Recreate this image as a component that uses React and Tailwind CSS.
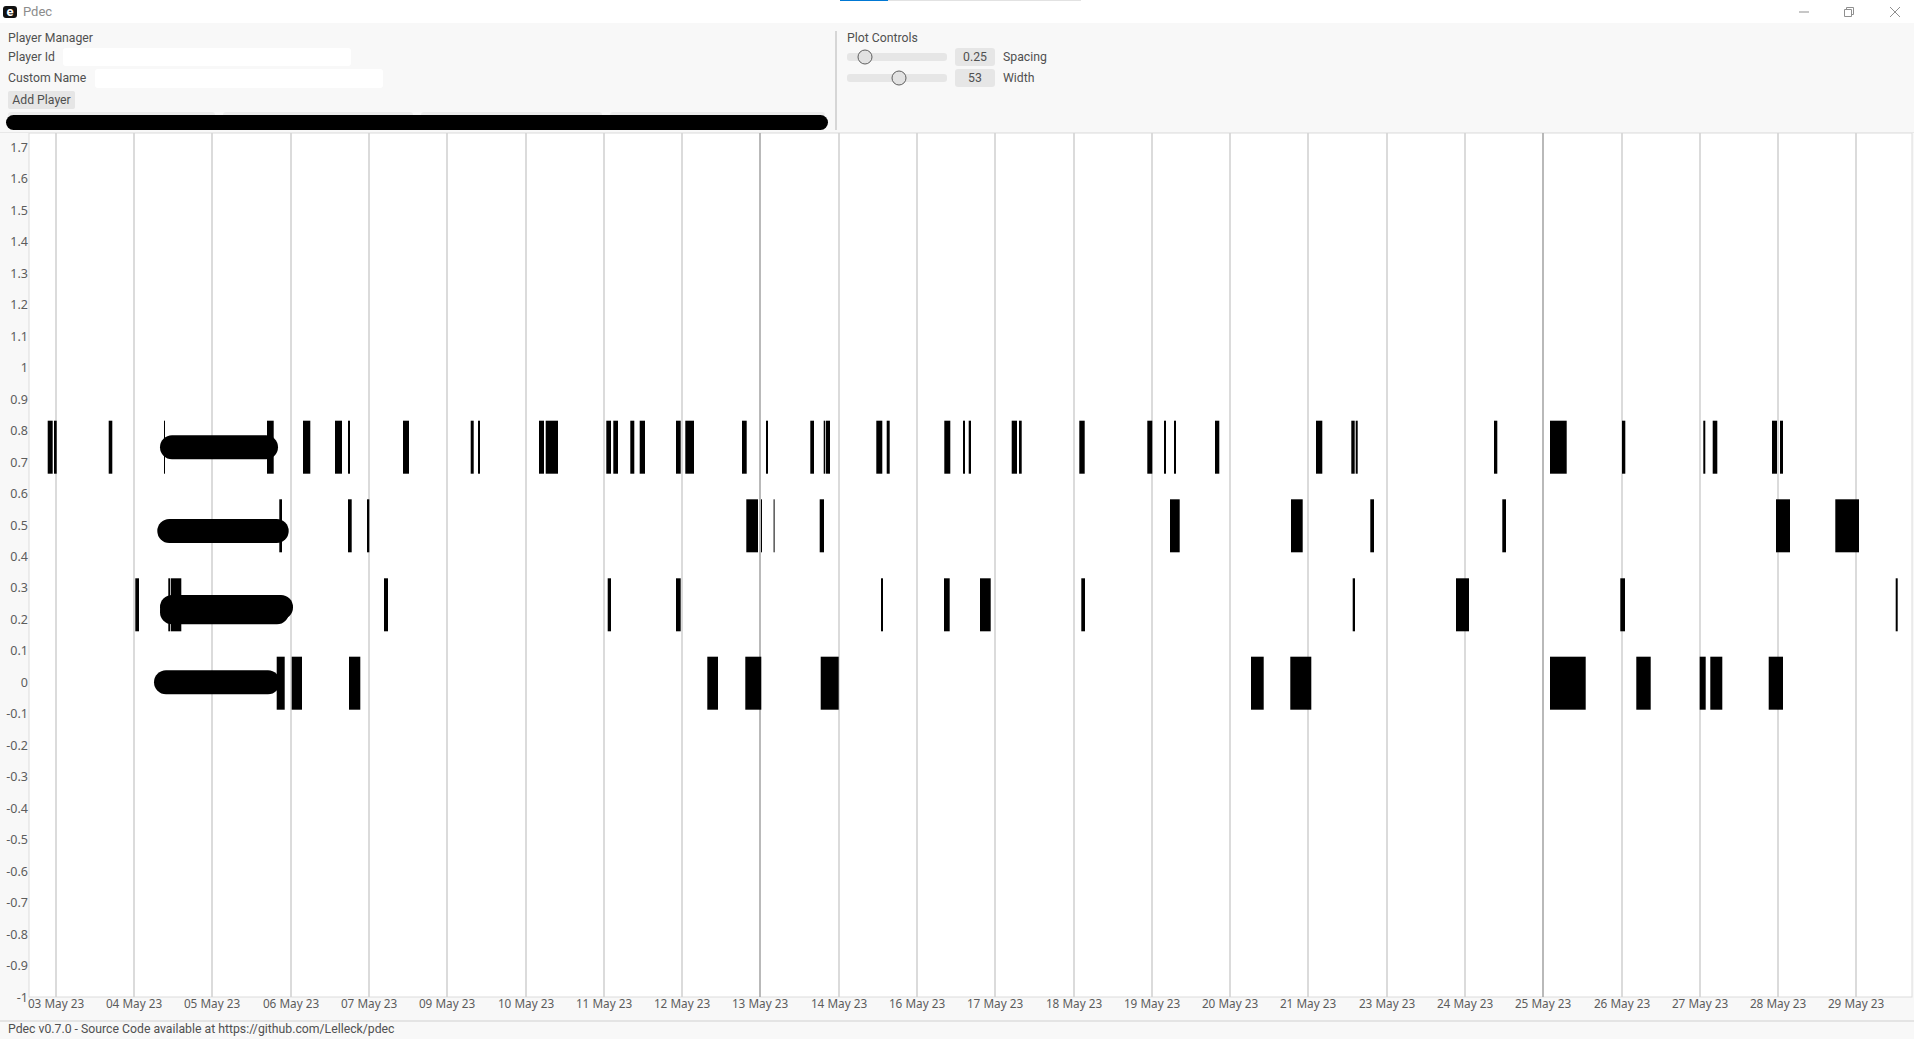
const gridLines = [
  [56, "03"], [134, "04"], [212, "05"], [291, "06"], [369, "07"], [447, "09"],
  [526, "10"], [604, "11"], [682, "12"], [760, "13"], [839, "14"], [917, "16"],
  [995, "17"], [1074, "18"], [1152, "19"], [1230, "20"], [1308, "21"], [1387, "23"],
  [1465, "24"], [1543, "25"], [1622, "26"], [1700, "27"], [1778, "28"], [1856, "29"],
];

const rows = [
  {
    top: 420.7,
    bars: [
      [47.7, 52.7], [54, 56.7], [108.7, 112.3], [164, 165], [267, 273.7], [303, 310.3], [335, 342], [348, 350],
      [403, 409], [470.7, 473.7], [478, 480], [539, 544], [545.7, 558], [606.3, 611], [613.3, 618], [630.3, 634.3],
      [639.7, 645], [676, 680.7], [685.3, 694], [742, 746.7], [766, 768], [810.3, 814], [823.7, 825.3], [826, 830],
      [876.3, 882.3], [886.7, 889.7], [944.3, 950.3], [963, 965], [968.7, 971], [1011.7, 1017], [1019, 1021.7],
      [1079.3, 1084.7], [1147.3, 1152.3], [1164, 1166], [1174, 1176], [1215, 1219.3], [1316, 1322.3],
      [1351.3, 1354.7], [1355.7, 1357.7], [1494, 1497.3], [1550, 1566.7], [1622, 1625.3], [1703.3, 1705.3],
      [1712.7, 1717.3], [1772, 1777], [1780, 1783],
    ],
  },
  {
    top: 499.3,
    bars: [
      [279.3, 282], [348, 351.7], [367, 369.3], [746.3, 758], [761, 762], [773.6, 774.6], [819.7, 824],
      [1170, 1179.7], [1291, 1302.7], [1370.3, 1374], [1502.3, 1506], [1776, 1790], [1835.3, 1859],
    ],
  },
  {
    top: 578.3,
    bars: [
      [135.3, 139], [168.3, 170.3], [171, 181.3], [384, 388], [607.7, 611], [676, 680.7], [881, 883], [944, 949.7],
      [980, 990.7], [1081.3, 1085], [1352.7, 1355], [1456, 1469], [1620.3, 1625], [1895.7, 1897.7],
    ],
  },
  {
    top: 656.7,
    bars: [
      [276.7, 284.7], [291.7, 302], [349, 360.3], [707.3, 718], [745.3, 761.3], [820.7, 838.7], [1251, 1263.7],
      [1290.3, 1311.3], [1550, 1585.7], [1636.3, 1650.7], [1699.7, 1705.7], [1710.3, 1722.3], [1768.7, 1783],
    ],
  },
];

// the thick rounded smears drawn over the bars
const pills = [
  [160, 278, 435.3, 24],
  [157.3, 288.7, 519, 24],
  [160, 293, 595, 24.5],
  [160, 289, 600, 24.3],
  [154, 280, 670.3, 24],
];

const yTicks = Array.from({ length: 28 }, (_, i) => 17 - i);

const Chart = () => (
  <svg viewBox="0 133 1914 887" className="block w-full h-full" style={{ fontFamily: "'Noto Sans', sans-serif" }}>
    <rect x="29" y="133" width="1883" height="864" fill="#ffffff" stroke="#dcdcdc" strokeWidth="1" />
    {gridLines.map(([x]) => (
      <line
        key={x}
        x1={x}
        x2={x}
        y1="133"
        y2="997"
        stroke={x === 760 || x === 1543 ? "#a8a8a8" : "#d2d2d2"}
        strokeWidth="1.6"
      />
    ))}
    {rows.map((row) =>
      row.bars.map(([a, b]) => (
        <rect key={`${row.top}-${a}`} x={a} y={row.top} width={b - a} height="53" fill="#000000" />
      ))
    )}
    {pills.map(([a, b, y, h]) => (
      <rect key={`${a}-${y}`} x={a} y={y} width={b - a} height={h} rx="12" fill="#000000" />
    ))}
    {yTicks.map((t) => (
      <text key={t} x="28" y={683 - t * 3.148 * 10 + 3.9} textAnchor="end" fontSize="12.5" fill="#5c5c5c">
        {t / 10}
      </text>
    ))}
    {gridLines.map(([x, day]) => (
      <text key={day} x={x} y="1007.5" textAnchor="middle" fontSize="11.75" fill="#5c5c5c">
        {day} May 23
      </text>
    ))}
  </svg>
);

const SliderRow = ({ thumb, value, label }) => (
  <div className="flex items-center h-[18px]">
    <div className="relative w-[100px] h-[8px] rounded-[3px] bg-[#e6e6e6]">
      <div
        className="absolute top-1/2 -translate-y-1/2 -translate-x-1/2 w-[15px] h-[15px] rounded-full bg-[#e2e2e2] border border-[#5f5f5f]"
        style={{ left: thumb }}
      />
    </div>
    <div className="ml-[8px] w-[40px] h-[18px] rounded-[3px] bg-[#e6e6e6] flex items-center justify-center">{value}</div>
    <span className="ml-[8px]">{label}</span>
  </div>
);

const App = () => {
  return (
    <div className="w-[1914px] h-[1039px] flex flex-col overflow-hidden bg-white text-[12.25px] leading-none text-[#505050] font-['Roboto',sans-serif]">
      {/* title bar */}
      <div className="relative h-[23px] shrink-0 flex items-center bg-white">
        <div className="ml-[3px] w-[14px] h-[12px] rounded-[3px] bg-[#111111] text-white text-[13px] font-bold flex items-center justify-center">
          e
        </div>
        <span className="ml-[6px] text-[13px] text-[#8c8c8c]">Pdec</span>
        <div className="absolute left-[840px] top-0 w-[241px] h-[1px] bg-[#e2e2e2]">
          <div className="w-[48px] h-[1px] bg-[#0078d4]" />
        </div>
        <div className="ml-auto flex items-center text-[#8f8f8f]">
          <svg width="12" height="12" viewBox="0 0 12 12" className="mr-[33px]">
            <line x1="1" x2="11" y1="6" y2="6" stroke="currentColor" />
          </svg>
          <svg width="12" height="12" viewBox="0 0 12 12" className="mr-[34px]">
            <path d="M1.5 3.5h7v7h-7zM3.5 3.5v-2h7v7h-2" fill="none" stroke="currentColor" />
          </svg>
          <svg width="12" height="12" viewBox="0 0 12 12" className="mr-[13px]">
            <path d="M1 1l10 10M11 1L1 11" fill="none" stroke="currentColor" />
          </svg>
        </div>
      </div>

      {/* controls */}
      <div className="h-[110px] shrink-0 flex bg-[#f8f8f8] border-b border-[#e8e8e8]">
        <div className="relative w-[835px] shrink-0 pl-[8px] pt-[7px] flex flex-col">
          <div className="h-[16px] flex items-center">Player Manager</div>
          <div className="mt-[2px] h-[18px] flex items-center">
            <span className="w-[55px]">Player Id</span>
            <div className="w-[288px] h-[18px] rounded-[3px] bg-white" />
          </div>
          <div className="mt-[3px] h-[19px] flex items-center">
            <span className="w-[87px]">Custom Name</span>
            <div className="w-[288px] h-[19px] rounded-[3px] bg-white" />
          </div>
          <div className="mt-[3px]">
            <button className="h-[18px] w-[67px] rounded-[2px] bg-[#e6e6e6] text-[#505050]">Add Player</button>
          </div>
          <div className="mt-[3px] flex gap-[8px]">
            <div className="w-[207px] h-[12px] rounded-t-[3px] bg-[#ececec]" />
            <div className="w-[190px] h-[12px] rounded-t-[3px] bg-[#ececec]" />
            <div className="w-[181px] h-[12px] rounded-t-[3px] bg-[#ececec]" />
            <div className="w-[215px] h-[12px] rounded-t-[3px] bg-[#ececec]" />
          </div>
          <div className="absolute left-[6px] top-[91.7px] w-[822px] h-[15.3px] rounded-full bg-black" />
        </div>
        <div className="w-[2px] h-[99px] mt-[8px] shrink-0 bg-[#d6d6d6]" />
        <div className="ml-[10px] pt-[7px] flex flex-col">
          <div className="h-[16px] flex items-center">Plot Controls</div>
          <div className="mt-[2px] flex flex-col gap-[3px]">
            <SliderRow thumb="18px" value="0.25" label="Spacing" />
            <SliderRow thumb="52.2px" value="53" label="Width" />
          </div>
        </div>
      </div>

      {/* plot */}
      <div className="flex-1 min-h-0 bg-[#f8f8f8]">
        <Chart />
      </div>

      {/* footer */}
      <div className="h-[19px] shrink-0 flex items-center pl-[8px] pb-[3px] bg-[#f8f8f8] border-t-2 border-[#e4e4e4]">
        Pdec v0.7.0 - Source Code available at https://github.com/Lelleck/pdec
      </div>
    </div>
  );
};

export default App;
